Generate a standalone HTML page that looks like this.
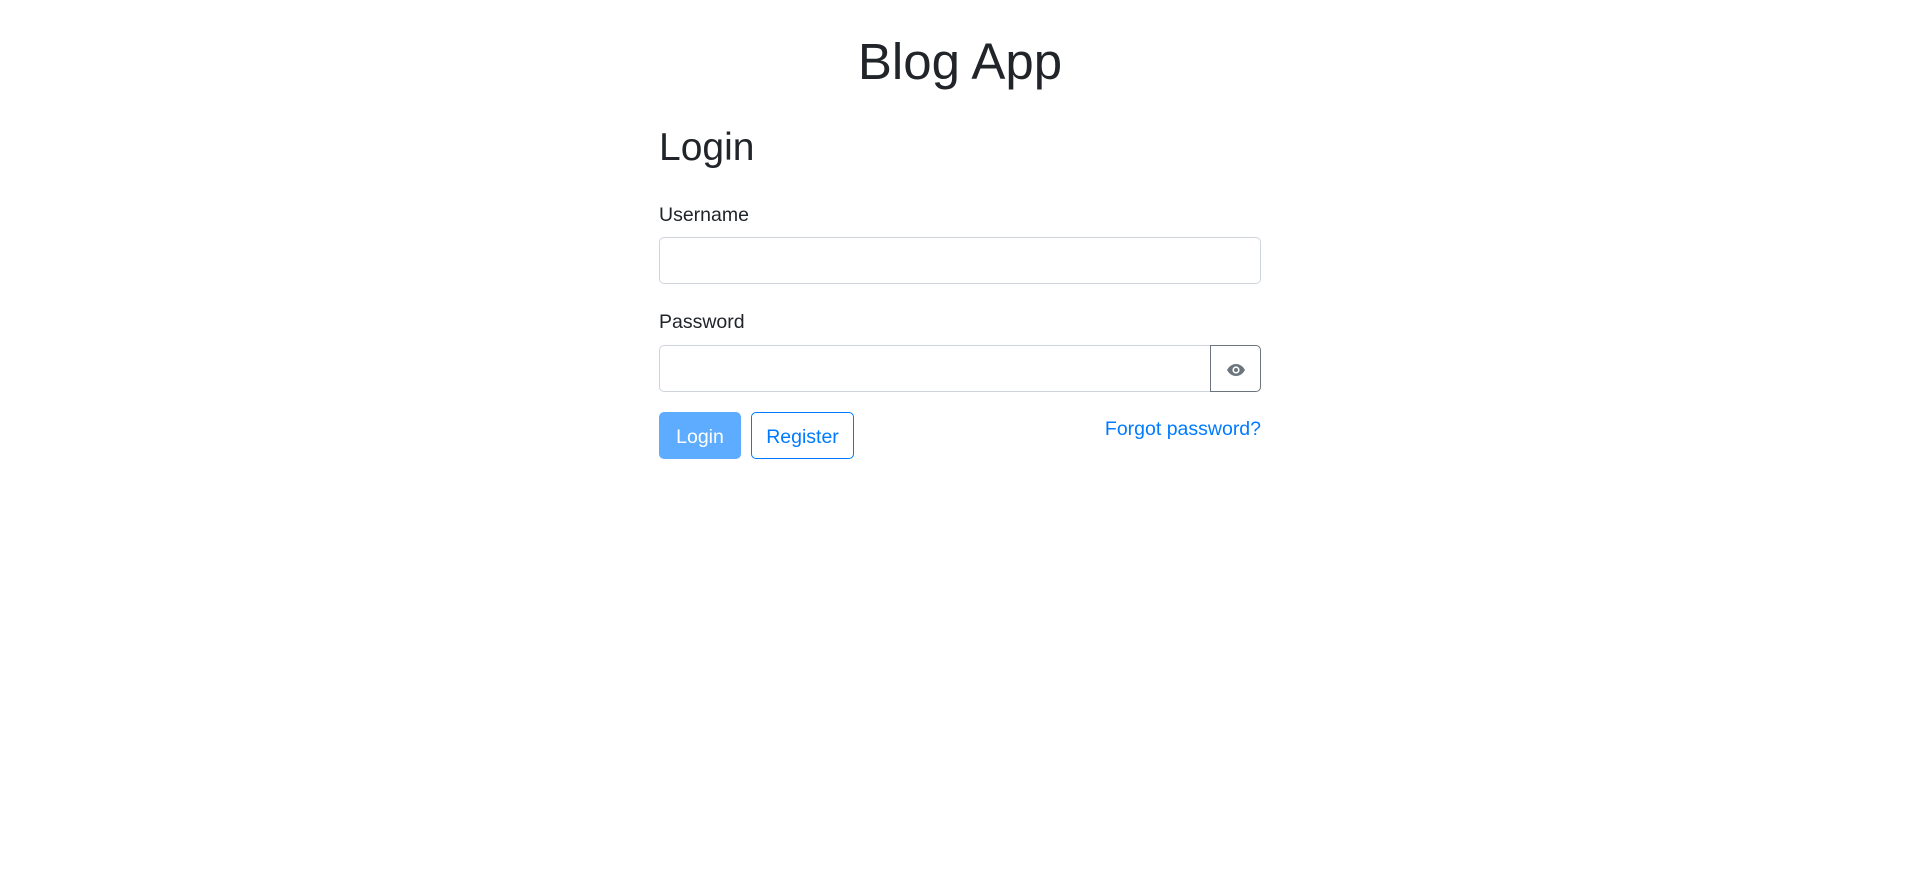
<!DOCTYPE html>
<html><head><meta charset="utf-8"><style>
*{box-sizing:border-box;margin:0;padding:0}
body{width:1920px;height:891px;background:#fff;font-family:"Liberation Sans",sans-serif;color:#212529;position:relative;overflow:hidden}
.a{position:absolute;white-space:nowrap}
h1{font-weight:400;font-size:51px;line-height:1;left:0;width:1920px;text-align:center;top:36px}
h2{font-weight:400;font-size:39px;line-height:1;left:659px;top:128px}
.lbl{font-size:19.5px;left:659px;line-height:1}
.in{border:1px solid #ced4da;border-radius:5px;background:#fff}
.btn{font-size:19.5px;border-radius:5px;display:flex;align-items:center;justify-content:center;padding-top:4px}
</style></head><body>
<h1 class="a">Blog App</h1>
<h2 class="a">Login</h2>
<div class="a lbl" style="top:206px">Username</div>
<div class="a in" style="left:659px;top:237px;width:602px;height:47px"></div>
<div class="a lbl" style="top:313px">Password</div>
<div class="a in" style="left:659px;top:345px;width:552px;height:47px;border-radius:5px 0 0 5px"></div>
<div class="a" style="left:1210px;top:345px;width:51px;height:47px;border:1px solid #6c757d;border-radius:0 5px 5px 0;display:flex;align-items:center;justify-content:center;padding-top:2px">
<svg width="20" height="14" viewBox="0 0 20 14"><path d="M1 7C3.5 2.5 7 1 10 1s6.5 1.5 9 6c-2.5 4.5-6 6-9 6S3.5 11.5 1 7z" fill="#6c757d"/><circle cx="10" cy="7" r="3.6" fill="#fff"/><circle cx="10" cy="7" r="2" fill="#6c757d"/></svg></div>
<div class="a btn" style="left:659px;top:412px;width:82px;height:47px;background:#5eacff;color:#fff">Login</div>
<div class="a btn" style="left:751px;top:412px;width:103px;height:47px;border:1px solid #007bff;color:#007bff">Register</div>
<div class="a" style="right:659px;top:418px;font-size:19.5px;color:#007bff;line-height:1.2">Forgot password?</div>
</body></html>
